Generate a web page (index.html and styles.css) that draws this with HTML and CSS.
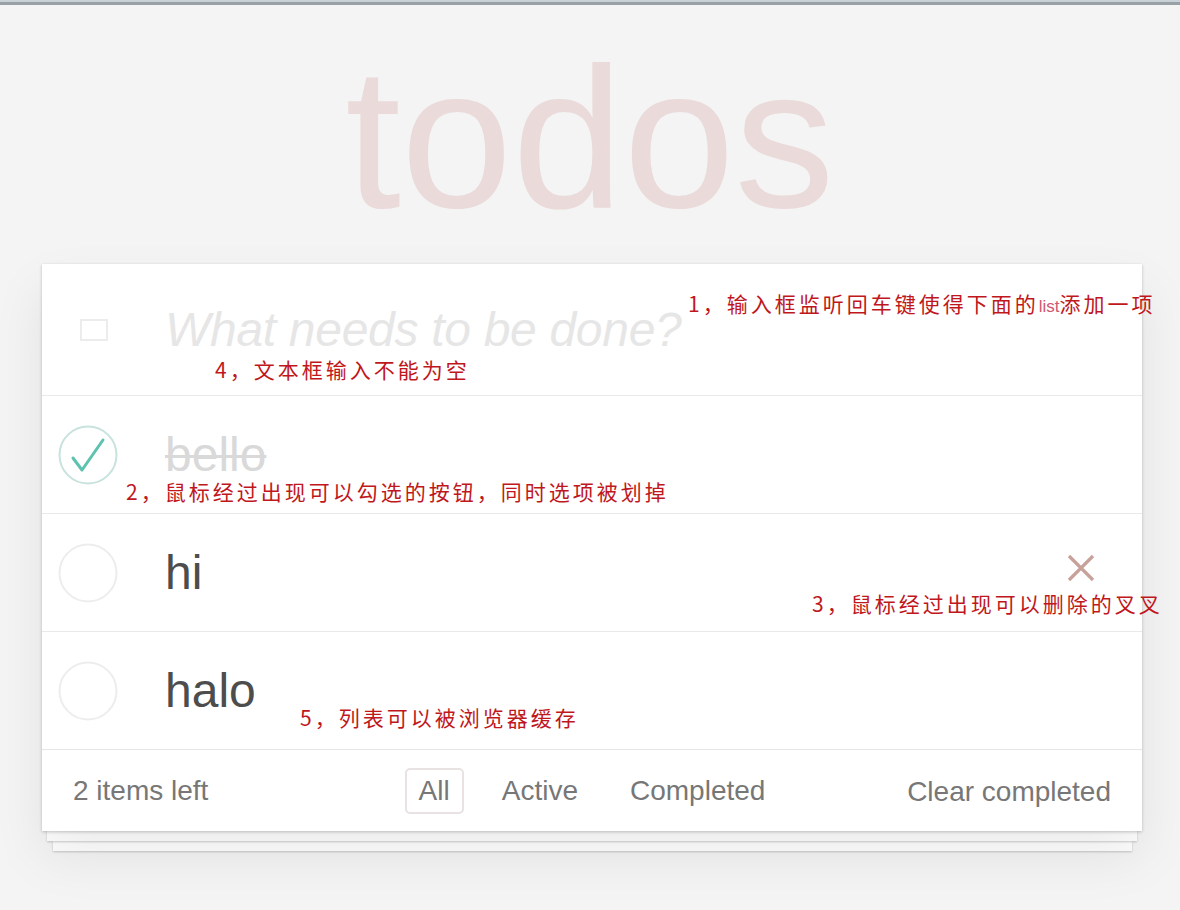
FILE: index.html
```html
<!DOCTYPE html>
<html lang="zh-CN">
<head>
<meta charset="utf-8">
<title>todos</title>
<link rel="stylesheet" href="styles.css">
</head>
<body>
<div class="page">
  <div class="topbar"></div>
  <h1 class="title">todos</h1>

  <section class="app">
    <header class="new-row">
      <span class="toggle-all"></span>
      <input class="new-todo" type="text" placeholder="What needs to be done?">
    </header>
    <ul class="list">
      <li class="item done">
        <span class="check">
          <svg width="60" height="60" viewBox="0 0 60 60"><circle cx="30" cy="30" r="28.5" fill="none" stroke="#c8e2dd" stroke-width="2"/><polyline points="15,33 24,45 45,15" fill="none" stroke="#5dc2af" stroke-width="3" stroke-linecap="round" stroke-linejoin="round"/></svg>
        </span>
        <span class="label">bello</span>
      </li>
      <li class="item">
        <span class="check"><svg width="60" height="60" viewBox="0 0 60 60"><circle cx="30" cy="30" r="28.5" fill="none" stroke="#ededed" stroke-width="2"/></svg></span>
        <span class="label">hi</span>
        <span class="destroy"><svg width="28" height="28" viewBox="0 0 28 28"><path d="M2 2 L26 26 M26 2 L2 26" stroke="#c7a29b" stroke-width="3.2" stroke-linecap="butt"/></svg></span>
      </li>
      <li class="item">
        <span class="check"><svg width="60" height="60" viewBox="0 0 60 60"><circle cx="30" cy="30" r="28.5" fill="none" stroke="#ededed" stroke-width="2"/></svg></span>
        <span class="label">halo</span>
      </li>
    </ul>
    <footer class="footer">
      <span class="count">2 items left</span>
      <ul class="filters">
        <li class="filter selected">All</li>
        <li class="filter">Active</li>
        <li class="filter">Completed</li>
      </ul>
      <span class="clear">Clear completed</span>
    </footer>
  </section>
  <div class="sheet sheet1"></div>
  <div class="sheet sheet2"></div>

  <p class="note note1">1，输入框监听回车键使得下面的<span class="latin">list</span>添加一项</p>
  <p class="note note4">4，文本框输入不能为空</p>
  <p class="note note2">2，鼠标经过出现可以勾选的按钮，同时选项被划掉</p>
  <p class="note note3">3，鼠标经过出现可以删除的叉叉</p>
  <p class="note note5">5，列表可以被浏览器缓存</p>
</div>
</body>
</html>
```

FILE: styles.css
```css
* { box-sizing: border-box; }

html, body {
  margin: 0;
  padding: 0;
  background: #f4f4f4;
  font-family: "Liberation Sans", Arial, sans-serif;
}

.page {
  position: relative;
  width: 1180px;
  height: 910px;
  overflow: hidden;
}

.topbar {
  height: 5px;
  border-top: 2px solid #c8d2d6;
  border-bottom: 3px solid #98a2a6;
  background: #98a2a6;
}

.title {
  margin: 0;
  padding-top: 33px;
  height: 259px;
  font-size: 200px;
  line-height: 200px;
  font-weight: normal;
  text-align: center;
  color: #eadada;
  letter-spacing: 0;
}

.app {
  position: relative;
  width: 1100px;
  margin-left: 42px;
  background: #fff;
  box-shadow: 0 1px 3px rgba(0, 0, 0, 0.22), 0 25px 50px rgba(0, 0, 0, 0.08);
  z-index: 2;
}

.new-row {
  display: flex;
  align-items: center;
  height: 131px;
}

.toggle-all {
  width: 28px;
  height: 22px;
  margin-left: 38px;
  border: 2px solid #ececec;
}

.new-todo {
  flex: 1;
  margin-left: 57px;
  border: none;
  outline: none;
  background: transparent;
  font-family: "Liberation Sans", Arial, sans-serif;
  font-size: 48px;
  font-style: italic;
  line-height: 67px;
  padding: 0;
  color: #4d4d4d;
  letter-spacing: -0.3px;
}

.new-todo::placeholder {
  color: #e6e6e6;
  font-style: italic;
}

.list {
  list-style: none;
  margin: 0;
  padding: 0;
}

.item {
  display: flex;
  align-items: center;
  height: 118px;
  border-top: 1px solid #e9e9e9;
}

.check {
  display: flex;
  margin-left: 16px;
  width: 60px;
  height: 60px;
}

.label {
  margin-left: 47px;
  font-size: 48px;
  line-height: 58px;
  color: #4d4d4d;
}

.done .label {
  color: #d9d9d9;
  text-decoration: line-through;
  text-decoration-thickness: 3px;
}

.destroy {
  display: flex;
  margin-left: auto;
  margin-right: 47px;
  margin-top: -9px;
}

.footer {
  display: grid;
  grid-template-columns: 1fr auto 1fr;
  align-items: center;
  height: 82px;
  padding: 0 31px;
  border-top: 1px solid #e6e6e6;
  font-size: 28px;
  color: #777;
}

.count {
  justify-self: start;
}

.filters {
  display: flex;
  gap: 24px;
  list-style: none;
  margin: 0;
  padding: 0;
}

.filter {
  padding: 5px 12px;
  line-height: 32px;
  border: 2px solid transparent;
  border-radius: 5px;
}

.filter.selected {
  border-color: #e8e2e2;
}

.clear {
  justify-self: end;
  margin-top: 3px;
}

.sheet {
  height: 10px;
  background: #fff;
  box-shadow: 0 1px 2px rgba(0, 0, 0, 0.2);
}

.sheet1 {
  width: 1090px;
  margin-left: 47px;
  position: relative;
  z-index: 1;
}

.sheet2 {
  width: 1079px;
  margin-left: 53px;
}

.note {
  position: absolute;
  margin: 0;
  font-family: "Noto Sans CJK SC", sans-serif;
  font-size: 21px;
  line-height: 24px;
  letter-spacing: 3px;
  color: #c0171c;
  white-space: nowrap;
  z-index: 5;
}

.note .latin {
  font-family: "Liberation Sans", Arial, sans-serif;
  font-size: 17px;
  letter-spacing: 0;
  color: #d0576f;
}

.note1 { left: 688px; top: 291px; }
.note4 { left: 215px; top: 357px; }
.note2 { left: 126px; top: 479px; }
.note3 { left: 812px; top: 591px; }
.note5 { left: 300px; top: 705px; }
```
